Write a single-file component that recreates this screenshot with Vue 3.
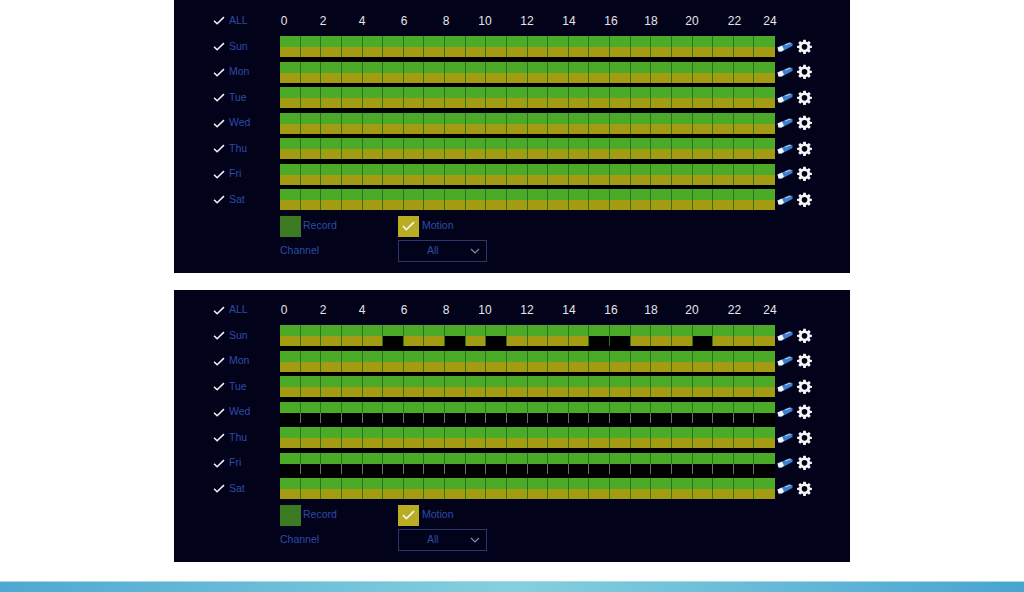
<script setup>
const hours = [
  { t: '0', gap: 39 }, { t: '2', gap: 39 }, { t: '4', gap: 42 }, { t: '6', gap: 42 },
  { t: '8', gap: 39 }, { t: '10', gap: 42 }, { t: '12', gap: 42 }, { t: '14', gap: 42 },
  { t: '16', gap: 40 }, { t: '18', gap: 41 }, { t: '20', gap: 42.5 }, { t: '22', gap: 35.5 }, { t: '24', gap: 0 }
]
const cells = Array.from({ length: 24 }, (_, i) => i)
const days = ['Sun', 'Mon', 'Tue', 'Wed', 'Thu', 'Fri', 'Sat']
const gaps = [5, 8, 10, 15, 16, 20]
const panels = [
  { id: 'a', gaps: {}, half: [] },
  { id: 'b', gaps: { Sun: gaps }, half: ['Wed', 'Fri'] }
]
function lower(panel, day, i) {
  if (panel.half.includes(day)) return 'lower tick'
  if ((panel.gaps[day] || []).includes(i)) return 'lower empty'
  return 'lower'
}
</script>

<template>
  <main class="page">
    <section v-for="panel in panels" :key="panel.id" class="panel" :class="panel.id">
      <header class="head">
        <div class="pick">
          <svg class="check" viewBox="0 0 13 10"><path d="M1 5.200 4.400 8.600 12 1.200" /></svg>
          <span class="label">ALL</span>
        </div>
        <div class="hours">
          <span v-for="h in hours" :key="h.t" class="hour" :style="{ marginRight: h.gap + 'px' }">{{ h.t }}</span>
        </div>
      </header>

      <div v-for="day in days" :key="day" class="row">
        <div class="pick">
          <svg class="check" viewBox="0 0 13 10"><path d="M1 5.200 4.400 8.600 12 1.200" /></svg>
          <span class="label">{{ day }}</span>
        </div>
        <div class="bar">
          <div v-for="i in cells" :key="i" class="cell">
            <div class="upper"></div>
            <div :class="lower(panel, day, i)"></div>
          </div>
        </div>
        <svg class="eraser" viewBox="0 0 16 10">
          <path d="M.5 5.500 12 .5 15.500 1 15.500 4 5 9.500 1.500 9.500Z" fill="#3f7fd0" />
          <path d="M.5 5.500 5 3.500 7 7.700 4.500 9.500 1.500 9.500Z" fill="#f2f6fb" />
          <path d="M8 3 13.500 1" stroke="#a9cdf2" stroke-width="1.200" fill="none" />
        </svg>
        <svg class="gear" viewBox="0 0 24 24">
          <path fill-rule="evenodd" d="M10 1h4l.6 3.200 1.800.8L19.100 3.100 21.900 5.900 20 8.600l.8 1.800L24 11v3l-3.200.6-.8 1.800 1.900 2.700-2.800 2.800-2.700-1.900-1.800.8L14 24h-4l-.6-3.200-1.800-.8-2.700 1.900-2.800-2.800L4 16.400l-.8-1.800L0 14v-3l3.200-.6.800-1.800L2.100 5.900 4.900 3.100 7.600 5l1.800-.8ZM12 8a4.500 4.500 0 1 0 0 9 4.500 4.500 0 0 0 0-9Z" />
        </svg>
      </div>

      <div class="legend">
        <div class="item">
          <span class="swatch record"></span>
          <span class="label">Record</span>
        </div>
        <div class="item">
          <span class="swatch motion">
            <svg class="tick-mark" viewBox="0 0 13 10"><path d="M1 5.200 4.400 8.600 12 1.200" /></svg>
          </span>
          <span class="label">Motion</span>
        </div>
      </div>

      <div class="channel">
        <span class="label channel-name">Channel</span>
        <div class="select">
          <span class="label">All</span>
          <svg class="chevron" viewBox="0 0 10 6"><path d="M1 1 5 5 9 1" /></svg>
        </div>
      </div>
    </section>
    <div class="strip"></div>
  </main>
</template>

<style>
html, body { margin: 0; background: #fff; }
</style>

<style scoped>
.page {
  width: 1024px;
  height: 592px;
  background: #fff;
  display: flex;
  flex-direction: column;
  align-items: center;
  font-family: "Liberation Sans", Arial, sans-serif;
  overflow: hidden;
}
.panel {
  width: 676px;
  box-sizing: border-box;
  padding-left: 38px;
  background: #02021a;
  flex: none;
}
.panel.a { height: 273px; }
.panel.b { height: 272px; margin-top: 17px; }
.head {
  display: flex;
  height: 36px;
  align-items: center;
  padding-top: 5px;
  box-sizing: border-box;
}
.panel.b .head { height: 35px; }
.pick {
  width: 68px;
  display: flex;
  align-items: center;
  gap: 4px;
  flex: none;
}
.check {
  width: 12px;
  height: 9px;
  flex: none;
  margin-left: 1px;
}
.check path, .tick-mark path {
  fill: none;
  stroke: #f4f4f8;
  stroke-width: 1.7;
}
.label {
  color: #2f4ba6;
  font-size: 10.5px;
  line-height: 14px;
  position: relative;
  top: -1px;
}
.hours {
  display: flex;
  margin-left: 4px;
}
.hour {
  color: #e6e6ea;
  font-size: 12px;
  line-height: 14px;
  width: 0;
  display: flex;
  justify-content: center;
  flex: none;
}
.row {
  display: flex;
  height: 25.5px;
  align-items: flex-start;
}
.row .pick { height: 21px; }
.bar {
  width: 495px;
  height: 25.5px;
  display: flex;
  flex: none;
  background: #000;
}
.row:nth-child(8) .bar { height: 21px; }
.cell {
  flex: 1;
  height: 21px;
  display: flex;
  flex-direction: column;
  position: relative;
}
.cell:not(:last-child)::after {
  content: "";
  position: absolute;
  top: 0;
  right: 0;
  width: 1px;
  height: 21px;
  background: #2a751b;
}
.upper {
  height: 11px;
  background: #4bab29;
}
.lower {
  height: 10px;
  background: #a39c12;
}
.lower.empty, .lower.tick { background: #000; }
.row:has(.tick) .cell::after {
  background: linear-gradient(#2a751b 0 11px, #6e6e6e 11px 21px);
}
.eraser {
  width: 16px;
  height: 10px;
  margin: 5.500px 0 0 2px;
  flex: none;
}
.gear {
  width: 15px;
  height: 15px;
  margin: 2.500px 0 0 4px;
  fill: #f6f6f8;
  flex: none;
}
.legend {
  display: flex;
  margin-left: 68px;
  height: 21px;
  margin-top: 1px;
}
.item {
  display: flex;
  align-items: center;
  gap: 2px;
}
.item:first-child { width: 118px; }
.item:last-child { gap: 3px; }
.swatch {
  width: 21px;
  height: 21px;
  flex: none;
  display: flex;
  align-items: center;
  justify-content: center;
}
.record { background: #3b7a22; }
.motion { background: #b9ad22; }
.tick-mark { width: 13px; height: 10px; }
.channel {
  display: flex;
  align-items: center;
  margin: 3px 0 0 68px;
  height: 22px;
}
.channel-name { width: 118px; flex: none; }
.select {
  width: 89px;
  height: 22px;
  box-sizing: border-box;
  border: 1px solid #2a3768;
  display: flex;
  align-items: center;
  padding: 0 6px 0 28px;
  justify-content: space-between;
}
.chevron {
  width: 10px;
  height: 6px;
}
.chevron path {
  fill: none;
  stroke: #7f8bb5;
  stroke-width: 1.2;
}
.strip {
  width: 100%;
  height: 11px;
  margin-top: auto;
  flex: none;
  border-top: 1px solid #a8d8e2;
  box-sizing: border-box;
  background: linear-gradient(90deg, #4da9d2 0%, #86d0de 50%, #47a5d1 100%);
}
</style>
